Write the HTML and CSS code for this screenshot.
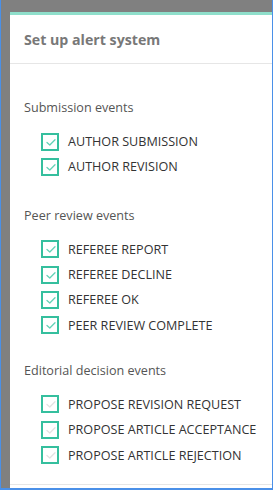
FILE: index.html
```html
<!DOCTYPE html>
<html>
<head>
<meta charset="utf-8">
<link rel="stylesheet" href="styles.css">
</head>
<body>
<div class="frame">
  <div class="panel">
    <div class="header"><h1 class="title">Set up alert system</h1></div>
    <div class="content">
      <section class="group">
        <div class="group-label">Submission events</div>
        <label class="item"><span class="box"><svg viewBox="0 0 18 18" class="check on"><polyline points="6,9.5 8.8,12 14,6.8"/></svg></span><span class="text">AUTHOR SUBMISSION</span></label>
        <label class="item"><span class="box"><svg viewBox="0 0 18 18" class="check on"><polyline points="6,9.5 8.8,12 14,6.8"/></svg></span><span class="text">AUTHOR REVISION</span></label>
      </section>
      <section class="group">
        <div class="group-label">Peer review events</div>
        <label class="item"><span class="box"><svg viewBox="0 0 18 18" class="check on"><polyline points="6,9.5 8.8,12 14,6.8"/></svg></span><span class="text">REFEREE REPORT</span></label>
        <label class="item"><span class="box"><svg viewBox="0 0 18 18" class="check on"><polyline points="6,9.5 8.8,12 14,6.8"/></svg></span><span class="text">REFEREE DECLINE</span></label>
        <label class="item"><span class="box"><svg viewBox="0 0 18 18" class="check on"><polyline points="6,9.5 8.8,12 14,6.8"/></svg></span><span class="text">REFEREE OK</span></label>
        <label class="item"><span class="box"><svg viewBox="0 0 18 18" class="check on"><polyline points="6,9.5 8.8,12 14,6.8"/></svg></span><span class="text">PEER REVIEW COMPLETE</span></label>
      </section>
      <section class="group group-last">
        <div class="group-label">Editorial decision events</div>
        <label class="item"><span class="box"><svg viewBox="0 0 18 18" class="check off"><polyline points="6,9.5 8.8,12 14,6.8"/></svg></span><span class="text">PROPOSE REVISION REQUEST</span></label>
        <label class="item"><span class="box"><svg viewBox="0 0 18 18" class="check off"><polyline points="6,9.5 8.8,12 14,6.8"/></svg></span><span class="text">PROPOSE ARTICLE ACCEPTANCE</span></label>
        <label class="item"><span class="box"><svg viewBox="0 0 18 18" class="check off"><polyline points="6,9.5 8.8,12 14,6.8"/></svg></span><span class="text">PROPOSE ARTICLE REJECTION</span></label>
      </section>
    </div>
    <div class="footer"></div>
  </div>
</div>
</body>
</html>
```
FILE: styles.css
```css
html, body {
  margin: 0;
  padding: 0;
}
body {
  width: 273px;
  height: 490px;
  overflow: hidden;
  font-family: "Open Sans", "Liberation Sans", sans-serif;
}
.frame {
  box-sizing: border-box;
  width: 273px;
  height: 490px;
  background: #808080;
  border-left: 1px solid #4a90e8;
  border-right: 1px solid #4a90e8;
  border-bottom: 2px solid #4a90e8;
  padding: 12px 0 0 9px;
  display: flex;
}
.panel {
  flex: 1;
  background: #fff;
  border-top: 3px solid #8fdfcb;
  display: flex;
  flex-direction: column;
}
.header {
  height: 48px;
  border-bottom: 1px solid #e6e6e6;
  display: flex;
  align-items: center;
  padding-left: 14px;
}
.title {
  margin: 0;
  font-size: 14.2px;
  font-weight: 700;
  color: #787878;
}
.content {
  flex: 1;
  padding: 34px 0 0 14px;
}
.group + .group {
  margin-top: 26px;
}
.group + .group-last {
  margin-top: 23px;
}
.group-label {
  font-size: 12.6px;
  line-height: 20px;
  color: #555;
  margin-bottom: 11px;
}
.item {
  display: flex;
  align-items: center;
  height: 25.3px;
  padding-left: 17px;
}
.box {
  box-sizing: border-box;
  width: 18px;
  height: 18px;
  border: 2px solid #35bf9e;
  display: flex;
  align-items: center;
  justify-content: center;
  flex: none;
}
.check {
  width: 18px;
  height: 18px;
  flex: none;
  fill: none;
  stroke-width: 1.3;
  stroke-linecap: round;
  stroke-linejoin: round;
}
.check.on { stroke: #64d2b7; }
.check.off { stroke: #e2e2e2; }
.text {
  margin-left: 9px;
  font-size: 12.6px;
  color: #333;
  white-space: nowrap;
}
.footer {
  height: 3px;
  border-top: 1px solid #e6e6e6;
}
```
